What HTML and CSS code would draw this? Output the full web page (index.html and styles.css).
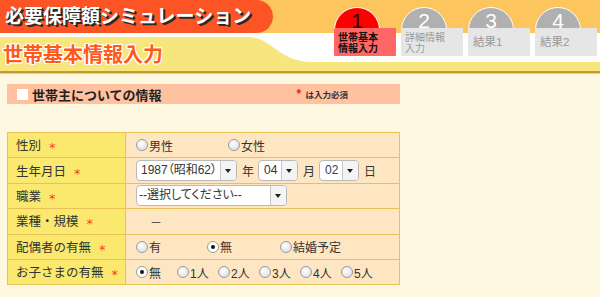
FILE: index.html
```html
<!DOCTYPE html>
<html lang="ja">
<head>
<meta charset="utf-8">
<title>必要保障額シミュレーション</title>
<link rel="stylesheet" href="styles.css">
</head>
<body>
<header class="hdr">
  <div class="hdr-top"><h1 class="app-title">必要保障額シミュレーション</h1></div>
  <div class="hdr-sub">
    <svg class="hdr-wave" width="320" height="29" viewBox="0 0 320 29"><path d="M0 4 L248 4 C272 4 278 29 312 29 L0 29 Z" fill="#f7e57e"/></svg>
    <h2 class="page-title">世帯基本情報入力</h2>
  </div>
  <ol class="steps">
    <li class="step step-on"><span class="step-num">1</span><span class="step-box">世帯基本<br>情報入力</span></li>
    <li class="step"><span class="step-num">2</span><span class="step-box step-box-sm">詳細情報<br>入力</span></li>
    <li class="step"><span class="step-num">3</span><span class="step-box step-box-one">結果1</span></li>
    <li class="step"><span class="step-num">4</span><span class="step-box step-box-one">結果2</span></li>
  </ol>
</header>
<main class="content">
  <div class="sec-bar">
    <div class="sec-title"><span class="sec-sq"></span>世帯主についての情報</div>
    <div class="sec-note"><span class="req">*</span> は入力必須</div>
  </div>
  <table class="form">
    <tr>
      <th>性別<span class="req-s">*</span></th>
      <td><div class="opts"><label class="opt w-male"><span class="radio"></span>男性</label><label class="opt"><span class="radio"></span>女性</label></div></td>
    </tr>
    <tr>
      <th>生年月日<span class="req-s">*</span></th>
      <td><div class="opts date">
        <span class="sel sel-year"><span class="sel-v">1987（昭和62）</span><span class="sel-a"></span></span><span class="unit">年</span>
        <span class="sel sel-sm"><span class="sel-v">04</span><span class="sel-a"></span></span><span class="unit">月</span>
        <span class="sel sel-sm sel-focus"><span class="sel-v">02</span><span class="sel-a"></span></span><span class="unit">日</span>
      </div></td>
    </tr>
    <tr>
      <th>職業<span class="req-s">*</span></th>
      <td><div class="opts"><span class="sel sel-job"><span class="sel-v">--選択してください--</span><span class="sel-a"></span></span></div></td>
    </tr>
    <tr>
      <th>業種・規模<span class="req-s">*</span></th>
      <td><div class="opts"><span class="dash">－</span></div></td>
    </tr>
    <tr>
      <th>配偶者の有無<span class="req-s">*</span></th>
      <td><div class="opts"><label class="opt w-sp1"><span class="radio"></span>有</label><label class="opt w-sp2"><span class="radio radio-on"></span>無</label><label class="opt"><span class="radio"></span>結婚予定</label></div></td>
    </tr>
    <tr>
      <th>お子さまの有無<span class="req-s">*</span></th>
      <td><div class="opts"><label class="opt w-kid"><span class="radio radio-on"></span>無</label><label class="opt w-kid"><span class="radio"></span>1人</label><label class="opt w-kid"><span class="radio"></span>2人</label><label class="opt w-kid"><span class="radio"></span>3人</label><label class="opt w-kid"><span class="radio"></span>4人</label><label class="opt"><span class="radio"></span>5人</label></div></td>
    </tr>
  </table>
</main>
</body>
</html>
```
FILE: styles.css
```css
* { box-sizing: border-box; }
html, body { margin: 0; padding: 0; }
body {
  width: 600px;
  height: 297px;
  overflow: hidden;
  background: #fff8e1;
  font-family: "Liberation Sans", "Noto Sans CJK JP", sans-serif;
  color: #333;
}
.hdr {
  position: relative;
  height: 74px;
  background: linear-gradient(#fdc55d 0 33px, #ffffff 33px 62px, #f7e57e 62px 71px, #c49c2a 71px 73px, #e6cf7a 73px 74px);
}
.hdr-top { height: 33px; display: flex; }
.app-title {
  margin: 0;
  width: 273px;
  height: 33px;
  background: #fc5424;
  border-radius: 0 17px 17px 0;
  color: #fff;
  font-size: 19px;
  font-weight: bold;
  line-height: 33px;
  padding-left: 5px;
  letter-spacing: 0;
  text-shadow: 1px 1px 0 #2a2a2a, 2px 2px 0 #2a2a2a;
  white-space: nowrap;
}
.hdr-sub { position: relative; height: 29px; }
.hdr-wave { position: absolute; left: 0; top: 0; }
.page-title {
  position: relative;
  margin: 0;
  padding: 10px 0 0 3px;
  font-size: 20px;
  line-height: 24px;
  font-weight: bold;
  color: #ff5a1e;
  text-shadow: 1px 0 0 #fff, -1px 0 0 #fff, 0 1px 0 #fff, 0 -1px 0 #fff, 1px 1px 0 #fff, -1px -1px 0 #fff, 1px -1px 0 #fff, -1px 1px 0 #fff;
  white-space: nowrap;
}
.steps {
  position: absolute;
  left: 334px;
  top: 7px;
  margin: 0;
  padding: 0;
  list-style: none;
  display: flex;
  gap: 5px;
}
.step { position: relative; width: 62px; height: 50px; }
.step-num {
  position: absolute;
  left: 0;
  top: 0;
  width: 46px;
  height: 46px;
  border-radius: 50%;
  background: #b0b0b0;
  border: 1.5px solid #fff;
  color: #fff;
  font-size: 21px;
  line-height: 24px;
  text-align: center;
  font-family: "Liberation Sans", sans-serif;
  padding-top: 1px;
}
.step-on .step-num { background: #ff0000; color: #111; }
.step-box {
  position: absolute;
  left: 0;
  top: 21px;
  width: 62px;
  height: 28px;
  background: #e6e6e6;
  color: #999;
  font-size: 10px;
  line-height: 11px;
  padding: 4px 0 0 4px;
  border-radius: 1px;
  white-space: nowrap;
}
.step-on .step-box { background: #ff6666; color: #111; font-weight: bold; }
.step-box-one { font-size: 11.5px; line-height: 28px; padding: 0 0 0 5px; }
.content { padding: 10px 7px 0 7px; }
.sec-bar {
  width: 393px;
  height: 20px;
  background: #ffc1a0;
  display: flex;
  align-items: center;
  justify-content: space-between;
  padding: 0 52px 0 10px;
}
.sec-title { display: flex; align-items: center; font-size: 13px; font-weight: bold; color: #222; }
.sec-sq { width: 11px; height: 11px; background: #fff; margin-right: 4px; }
.sec-note { font-size: 8.5px; font-weight: bold; color: #333; }
.req { color: #ff1a1a; font-size: 12px; margin-right: 2px; }
.form {
  margin-top: 28px;
  width: 393px;
  border-collapse: collapse;
}
.form th, .form td {
  border: 1px solid #e9c255;
  height: 25.4px;
  padding: 0;
}
.form th {
  width: 118px;
  background: #fbe96f;
  text-align: left;
  font-weight: normal;
  font-size: 12.5px;
  color: #333;
  padding-left: 8px;
  white-space: nowrap;
}
.req-s { color: #ff3b1a; font-size: 13px; margin-left: 8px; vertical-align: -2px; font-family: "DejaVu Sans", sans-serif; }
.form td { background: #ffe6c2; padding-left: 10px; }
.opts { display: flex; align-items: center; font-size: 12px; color: #333; white-space: nowrap; }
.opt { display: flex; align-items: center; }
.radio {
  width: 12px;
  height: 12px;
  border-radius: 50%;
  border: 1px solid #9a9a9a;
  background: radial-gradient(circle at 40% 35%, #ffffff, #d8d8d8);
  margin-right: 1px;
  position: relative;
}
.radio-on { background: #fff; border-color: #8aa88a; }
.radio-on::after {
  content: "";
  position: absolute;
  left: 3px;
  top: 3px;
  width: 4px;
  height: 4px;
  border-radius: 50%;
  background: #111;
}
.w-male { width: 92px; }
.w-sp1 { width: 71px; }
.w-sp2 { width: 73px; }
.w-kid { width: 41px; }
.date { gap: 0; }
.sel {
  display: flex;
  align-items: stretch;
  height: 21px;
  background: #fff;
  border: 1px solid #b9b9b9;
  border-radius: 4px;
  overflow: hidden;
}
.sel-v { flex: 1; min-width: 0; overflow: hidden; padding-left: 4px; line-height: 19px; font-size: 12px; color: #333; font-feature-settings: "palt"; }
.sel-a {
  flex: none;
  width: 16px;
  border-left: 1px solid #c8c8c8;
  background: #f4f4f4;
  position: relative;
}
.sel-a::after {
  content: "";
  position: absolute;
  left: 4px;
  top: 8px;
  border-left: 3.5px solid transparent;
  border-right: 3.5px solid transparent;
  border-top: 4px solid #222;
}
.sel-year { width: 101px; }
.sel-sm { width: 40px; }
.sel-sm .sel-v { padding-left: 5px; }
.sel-focus .sel-v { color: #345; }
.sel-job { width: 151px; }
.sel-job .sel-v { padding-left: 2px; }
.unit { font-size: 12px; margin: 0 4px 0 5px; }
.dash { padding-left: 14px; font-size: 12px; }
```
